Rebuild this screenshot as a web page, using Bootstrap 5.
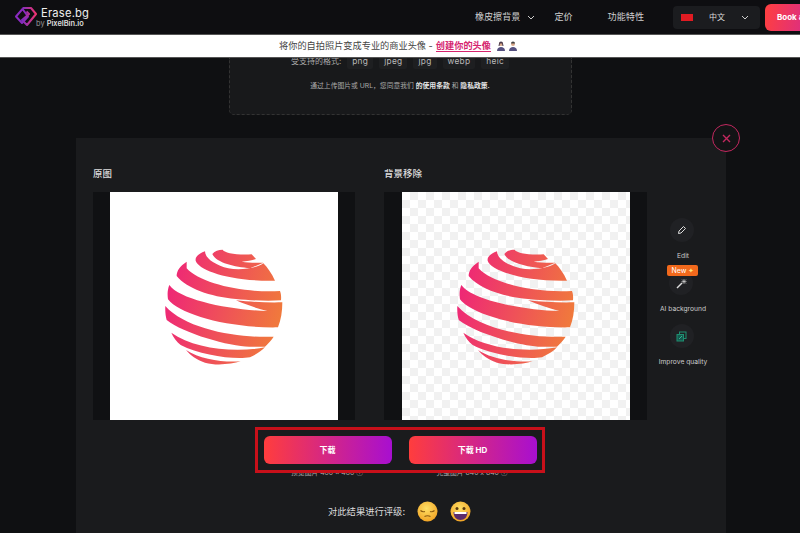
<!DOCTYPE html>
<html lang="zh">
<head>
<meta charset="utf-8">
<title>Erase bg</title>
<link href="https://cdn.jsdelivr.net/npm/bootstrap@5.3.0/dist/css/bootstrap.min.css" rel="stylesheet">
<style>
html,body{height:533px;overflow:hidden}
body{background:#0f1012;color:#ddd;font-family:Inter,"Noto Sans CJK SC",sans-serif;font-size:9px}
.topbar{height:34px;background:#0e0e11;padding:0 0 0 14px;flex-wrap:nowrap}
.logo-word{font-size:11.2px;line-height:12px;color:#eee;letter-spacing:.2px;margin-top:1px}
.logo-sub{font-size:7.4px;line-height:10px;color:#999;margin-left:-5px}
.logo-sub b{color:#ddd;font-weight:600}
.menu-link{font-size:9.1px;color:#cfcfcf}
.chev-gap{margin-left:7px}
.menu-gap-a{margin-left:19px}
.menu-gap-b{margin-left:35px}
.menu-gap-c{margin-left:29px}
.lang-box{width:87px;height:23px;background:#1b1c1f;border-radius:4px;padding:0 11px 0 8px;font-size:8px;color:#ddd}
.flag{width:12px;height:7px;background:#e01b22;display:block}
.book-btn{width:35px;height:27px;margin-left:5px;border:0;border-radius:6px 0 0 6px;background:linear-gradient(100deg,#ff3f3f,#e0307a);color:#fff;font-size:8px;font-weight:700;padding:0 0 0 12px;text-align:left;white-space:nowrap;overflow:hidden}
.promo{position:relative;z-index:2;height:24px;background:#fff;color:#444;border-top:1px solid #555;border-bottom:1px solid #555;font-size:9.2px}
.promo a{color:#d5246e;font-weight:600;text-decoration:none;border-bottom:1px solid #d5246e;line-height:11px;margin-left:3px}
.emo-a{margin-left:6px}
.emo-b{margin-right:4px}
.upload-box{width:343px;height:57px;margin:0 auto;background:#18191b;border:1px dashed #333;border-top:0;border-radius:0 0 5px 5px;color:#aaa}
.fmt-row{font-size:8px;margin-top:-5px;gap:6px;height:16px}
.chip{background:#1e1f21;border-radius:2px;padding:2px 5px;font-size:8.3px;letter-spacing:.3px;color:#bbb;line-height:12px}
.legal{font-size:6.8px;margin-top:12px;color:#aaa}
.legal b{color:#e6e6e6;font-weight:600}
.panel-wrap{padding:23px 74px 0 76px}
.result-panel{height:400px;background:#1a1b1d;padding:30px 0 0 17px}
.close-ring{position:absolute;right:-14px;top:-14px;width:28px;height:28px;border:1.5px solid #c2285f;border-radius:50%;background:#131315}
.col-title{font-size:9.5px;color:#ddd;height:24px;line-height:12px;font-weight:500}
.img-frame{width:262px;height:228px;background:#101113}
.frame-wide{width:263px;padding-left:1px}
.col-two{margin-left:29px}
.img-white{width:228px;height:228px;background:#fff}
.img-check{width:228px;height:228px;background:conic-gradient(#f1f1f1 25%,#fff 0 50%,#f1f1f1 0 75%,#fff 0) 0 0/16px 16px}
.tool-rail{width:72px;padding-top:50px}
.tool-item{height:53px;color:#ccc;font-size:6.7px;white-space:nowrap}
.tool-disc{width:24px;height:24px;border-radius:50%;background:#202124;margin:0 3px 9px 0;line-height:0}
.new-tag{position:absolute;left:-2px;top:-6px;width:31px;height:11px;background:#f2691c;border-radius:2px;color:#fff;font-size:7px;line-height:11px;text-align:center;white-space:nowrap}
.new-tag i{color:#ffe27a;font-style:normal}
.red-box{position:relative;z-index:1;width:290px;height:46px;margin:7px 0 0 162px;border:3.5px solid #c8101a;background:#1a1b1d;padding:0 5.5px;gap:17px}
.grad-btn{width:128px;height:28px;border:0;border-radius:6px;background:linear-gradient(90deg,#ff3d3d,#a80fd0);color:#fff;font-size:8px;font-weight:700;padding:0;flex:none}
.caps{margin-top:-5px;margin-left:165px;width:290px;gap:17px;font-size:6.8px;color:#aaa;padding:0 5px}
.caps span{width:128px;text-align:center;white-space:nowrap}
.rate-row{font-size:9.3px;color:#ddd;margin-top:23px;margin-left:235px;gap:12px}
</style>
</head>
<body>
<svg width="0" height="0" class="d-block position-absolute">
<defs>
<linearGradient id="sg" gradientUnits="userSpaceOnUse" x1="40" y1="150" x2="400" y2="240"><stop offset="0" stop-color="#ee2478"/><stop offset="1" stop-color="#f07c3a"/></linearGradient>
<radialGradient id="fy" cx=".45" cy=".35" r=".7"><stop offset="0" stop-color="#ffe066"/><stop offset="1" stop-color="#f0a020"/></radialGradient>
<linearGradient id="lg" x1="0" y1="0" x2="1" y2="0"><stop offset="0" stop-color="#7b2fbf"/><stop offset="1" stop-color="#f0336f"/></linearGradient>
<symbol id="globe" viewBox="0 0 600 390">
<g fill="url(#sg)">
<path d="M187 42C195 32 205 29 218 29C222 38 260 46 305 43L318 57C305 62 290 64 275 65C295 68 320 69 340 68L300 85C255 80 200 70 187 42Z"/>
<path d="M165 34C145 42 135 50 137 62C145 90 240 125 375 122C365 100 352 82 340 70C320 85 270 92 235 85C195 75 165 55 165 34Z"/>
<path d="M110 65C90 78 80 92 80 108C110 145 180 170 258 177C300 181 350 184 393 181C394 170 393 160 390 153C280 160 150 130 110 85Z"/>
<path d="M58 135C52 150 52 165 54 178C90 225 240 265 384 262C393 240 397 215 397 187C350 188 300 186 258 181C290 195 320 205 352 213C240 210 90 180 58 135Z"/>
<path d="M46 198C45 215 47 228 50 240C100 280 240 320 298 320L345 320C355 310 365 300 371 290C270 295 110 270 46 198Z"/>
<path d="M64 278C70 292 80 305 92 315C150 345 250 360 300 352C320 342 335 333 345 322C250 340 130 325 64 278Z"/>
<path d="M108 330C120 345 140 360 165 368C200 378 245 372 272 364C220 368 150 358 108 330Z"/>
</g>
</symbol>
</defs>
</svg>

<nav class="navbar topbar d-flex align-items-center justify-content-between">
  <div class="d-flex align-items-center gap-1">
    <svg width="23" height="22" viewBox="0 0 23 22" fill="none" stroke-width="2" stroke-linejoin="round">
      <path d="M8.500 3L2 10.500 8 17l6-6.500z" stroke="#8a2bc0"/>
      <path d="M8.500 2H17l5 6-9 11-5-5 7-6-2.500-2.500" stroke="url(#lg)"/>
    </svg>
    <div>
      <div class="logo-word">Erase.bg</div>
      <div class="logo-sub">by <b>PixelBin.io</b></div>
    </div>
  </div>
  <div class="d-flex align-items-center">
    <span class="menu-link">橡皮擦背景</span>
    <svg class="chev-gap" width="8" height="5" viewBox="0 0 8 5" fill="none" stroke="#ccc"><path d="M1 1l3 3 3-3"/></svg>
    <span class="menu-link menu-gap-a">定价</span>
    <span class="menu-link menu-gap-b">功能特性</span>
    <div class="lang-box d-flex align-items-center justify-content-between menu-gap-c">
      <span class="flag"></span><span>中文</span>
      <svg width="8" height="5" viewBox="0 0 8 5" fill="none" stroke="#ccc"><path d="M1 1l3 3 3-3"/></svg>
    </div>
    <button class="book-btn">Book a</button>
  </div>
</nav>

<div class="promo d-flex align-items-center justify-content-center">
  <span>将你的自拍照片变成专业的商业头像 - </span><a href="#">创建你的头像</a>
  <svg class="emo-a" width="8" height="10" viewBox="0 0 8 10"><circle cx="4" cy="3" r="2" fill="#d9a88a"/><path d="M2 2.500a2 2 0 0 1 4 0L6.500 5h-1l-.5-2.500h-2L2.500 5h-1z" fill="#4a3a4a"/><path d="M0 10c0-3 2-4 4-4s4 1 4 4z" fill="#55507f"/></svg>
  <svg class="ms-1 emo-b" width="8" height="10" viewBox="0 0 8 10"><circle cx="4" cy="3" r="2" fill="#d9a88a"/><path d="M2 2.500a2 2 0 0 1 4 0z" fill="#444"/><path d="M0 10c0-3 2-4 4-4s4 1 4 4z" fill="#55507f"/></svg>
</div>

<div class="upload-box d-flex flex-column align-items-center">
  <div class="fmt-row d-flex align-items-center">
    <span>受支持的格式:</span>
    <span class="chip">png</span><span class="chip">jpeg</span><span class="chip">jpg</span><span class="chip">webp</span><span class="chip">heic</span>
  </div>
  <div class="legal">通过上传图片或 URL，您同意我们 <b>的使用条款</b> 和 <b>隐私政策.</b></div>
</div>

<div class="panel-wrap">
  <div class="result-panel position-relative">
    <div class="close-ring d-flex align-items-center justify-content-center">
      <svg width="9" height="9" viewBox="0 0 9 9" stroke="#c2285f" stroke-width="1.400"><path d="M1 1l7 7M8 1l-7 7"/></svg>
    </div>
    <div class="d-flex">
      <div>
        <div class="col-title">原图</div>
        <div class="img-frame d-flex justify-content-center">
          <div class="img-white"><svg class="d-block" width="228" height="228"><use href="#globe" x="40" y="48" width="200" height="130"/></svg></div>
        </div>
      </div>
      <div class="col-two">
        <div class="col-title">背景移除</div>
        <div class="img-frame frame-wide d-flex justify-content-center">
          <div class="img-check"><svg class="d-block" width="228" height="228"><use href="#globe" x="40" y="48" width="200" height="130"/></svg></div>
        </div>
      </div>
      <div class="tool-rail d-flex flex-column align-items-center">
        <div class="tool-item d-flex flex-column align-items-center">
          <div class="tool-disc d-flex align-items-center justify-content-center">
            <svg width="10" height="10" viewBox="0 0 10 10" fill="none" stroke="#ddd" stroke-width="1"><path d="M1.500 8.500l.5-2.500 4.500-4.500 2 2L4 8z"/></svg>
          </div>Edit
        </div>
        <div class="tool-item d-flex flex-column align-items-center">
          <div class="tool-disc position-relative d-flex align-items-center justify-content-center">
            <span class="new-tag">New <i>✦</i></span>
            <svg width="11" height="11" viewBox="0 0 11 11" fill="none" stroke="#ddd"><path d="M1 10l5-5" stroke-width="1.400"/><path d="M8 1v5M5.500 3.500h5M6 1.500l4 4M10 1.500l-4 4" stroke-width=".6"/></svg>
          </div>AI background
        </div>
        <div class="tool-item d-flex flex-column align-items-center">
          <div class="tool-disc d-flex align-items-center justify-content-center">
            <svg width="11" height="11" viewBox="0 0 11 11" fill="none"><rect x="3.500" y="1" width="6.500" height="6.500" stroke="#1f8f70"/><rect x="1" y="3.500" width="6.500" height="6.500" fill="#15584f" stroke="#1f8f70"/><path d="M3 8l3-3" stroke="#2fb58c"/></svg>
          </div>Improve quality
        </div>
      </div>
    </div>
    <div class="red-box d-flex align-items-center">
      <button class="grad-btn">下载</button>
      <button class="grad-btn">下载 HD</button>
    </div>
    <div class="caps d-flex">
      <span>预览图片 480 × 480 ⓘ</span>
      <span>完整图片 640 x 640 ⓘ</span>
    </div>
    <div class="rate-row d-flex align-items-center">
      <span>对此结果进行评级:</span>
      <svg width="21" height="21" viewBox="0 0 21 21"><circle cx="10.500" cy="10.500" r="10" fill="url(#fy)"/><path d="M3.500 9.500c1.500 1.500 3 1.500 4.500 1M17.500 9.500c-1.500 1.500-3 1.500-4.500 1M7.500 15.500c2-1 4-1 6 0" stroke="#8a5a10" stroke-width="1.100" fill="none"/></svg>
      <svg width="21" height="21" viewBox="0 0 21 21"><circle cx="10.500" cy="10.500" r="10" fill="url(#fy)"/><circle cx="7" cy="7.500" r="1.500" fill="#5a3a10"/><circle cx="14" cy="7.500" r="1.500" fill="#5a3a10"/><path d="M3.500 11h14c0 5-3 8-7 8s-7-3-7-8z" fill="#5b2b6a"/><path d="M4.500 11h12v2h-12z" fill="#fff"/></svg>
    </div>
  </div>
</div>
</body>
</html>
